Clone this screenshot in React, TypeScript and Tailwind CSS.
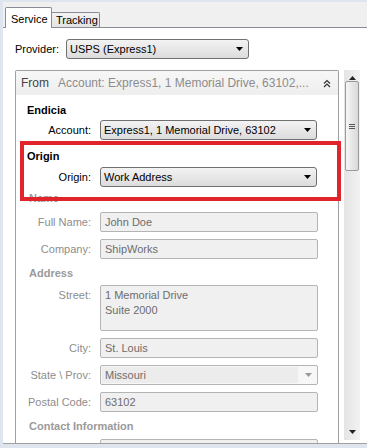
import React from "react";

const Arrow = ({ color = "#000" }: { color?: string }) => (
  <svg width="7" height="4" viewBox="0 0 7 4">
    <path d="M0 0h7L3.5 4z" fill={color} />
  </svg>
);

const Combo = ({ value, w = "w-[217px]" }: { value: string; w?: string }) => (
  <div
    className={`${w} h-[20px] flex items-center justify-between rounded-[3px] border border-[#707070] bg-gradient-to-b from-[#f3f3f3] to-[#dcdcdc] pl-[3px] pr-[5px] text-black`}
  >
    <span>{value}</span>
    <Arrow />
  </div>
);

const Field = ({ value, h = "h-[20px]" }: { value: string; h?: string }) => (
  <div
    className={`w-[218px] ${h} rounded-[2px] border border-[#b4b4b4] bg-[#f0f0f0] pl-[4px] pt-[2px] text-[#6d6d6d] leading-[15px]`}
  >
    {value.split("\n").map((l) => (
      <div key={l}>{l}</div>
    ))}
  </div>
);

const Row = ({
  label,
  disabled,
  className = "",
  children,
}: {
  label: string;
  disabled?: boolean;
  className?: string;
  children: React.ReactNode;
}) => (
  <div className={`flex items-start ${className}`}>
    <div
      className={`w-[76px] h-[20px] flex items-center justify-end pr-[1px] ${
        disabled ? "text-[#8d8d8d]" : "text-black"
      }`}
    >
      {label}
    </div>
    <div className="ml-[8px]">{children}</div>
  </div>
);

const Heading = ({ text, disabled, className = "" }: { text: string; disabled?: boolean; className?: string }) => (
  <div
    className={`h-[14px] leading-[14px] font-bold ${
      disabled ? "pl-[13px] text-[#9a9a9a]" : "pl-[11px] text-black"
    } ${className}`}
  >
    {text}
  </div>
);

export default function App() {
  return (
    <div className="relative w-[367px] h-[448px] overflow-hidden bg-[#dfe5ee] pl-[3px] pt-[2px] font-['Liberation_Sans',Arial,sans-serif] text-[11px]">
      <div className="h-[442px] flex flex-col bg-white border-b border-[#a0a0a0]">
        {/* tabs */}
        <div className="h-[26px] shrink-0 flex items-end bg-[#f0f0f0] border-b border-[#898c95] pl-[2px]">
          <div className="relative z-10 -mb-px w-[47px] h-[21px] bg-white border border-b-0 border-[#898c95] rounded-t-[2px] pl-[5px] pt-[3px] text-black">
            Service
          </div>
          <div className="w-[48px] h-[15px] border border-l-0 border-b-0 border-[#898c95] rounded-tr-[2px] bg-gradient-to-b from-[#f2f2f2] to-[#e3e3e3] pl-[4px] text-black leading-[14px]">
            Tracking
          </div>
        </div>

        {/* provider */}
        <div className="mt-[11px] flex items-center pl-[12px] text-black">
          <span className="w-[51px]">Provider:</span>
          <Combo value="USPS (Express1)" w="w-[183px]" />
        </div>

        <div className="mt-[11px] flex flex-1 min-h-0 pl-[12px]">
          {/* group box */}
          <div className="w-[324px] flex flex-col border border-b-0 border-[#a0a0a0] rounded-t-[2px] overflow-hidden">
            <div className="h-[24px] shrink-0 flex items-center bg-gradient-to-b from-[#f7f7f7] to-[#eeeeee] pl-[5px] pr-[7px] text-[12px]">
              <span className="text-[#444]">From</span>
              <span className="ml-[9px] flex-1 truncate text-[#8c8c8c]">
                Account: Express1, 1 Memorial Drive, 63102,...
              </span>
              <svg width="8" height="9" viewBox="0 0 8 9" className="ml-[8px]">
                <path d="M1 4.5L4 1.5l3 3M1 8L4 5l3 3" fill="none" stroke="#333" strokeWidth="1.2" />
              </svg>
            </div>

            <Heading text="Endicia" className="mt-[8px]" />
            <Row label="Account:" className="mt-[3px]">
              <Combo value="Express1, 1 Memorial Drive, 63102" />
            </Row>

            <Heading text="Origin" className="mt-[9px]" />
            <Row label="Origin:" className="mt-[4px]">
              <Combo value="Work Address" />
            </Row>

            <Heading text="Name" disabled className="mt-[4px]" />
            <Row label="Full Name:" disabled className="mt-[7px]">
              <Field value="John Doe" />
            </Row>
            <Row label="Company:" disabled className="mt-[7px]">
              <Field value="ShipWorks" />
            </Row>

            <Heading text="Address" disabled className="mt-[7px]" />
            <Row label="Street:" disabled className="mt-[5px]">
              <Field value={"1 Memorial Drive\nSuite 2000"} h="h-[46px]" />
            </Row>
            <Row label="City:" disabled className="mt-[7px]">
              <Field value="St. Louis" />
            </Row>
            <Row label="State \ Prov:" disabled className="mt-[7px]">
              <div className="w-[218px] h-[20px] flex rounded-[2px] border border-[#b4b4b4] bg-[#f7f7f7]">
                <div className="flex-1 bg-[#ececec] m-px pl-[3px] text-[#6d6d6d] leading-[16px]">Missouri</div>
                <div className="w-[18px] flex items-center justify-center">
                  <Arrow color="#9a9a9a" />
                </div>
              </div>
            </Row>
            <Row label="Postal Code:" disabled className="mt-[7px]">
              <Field value="63102" />
            </Row>

            <Heading text="Contact Information" disabled className="mt-[7px]" />
            <Row label="" disabled className="mt-[6px]">
              <Field value="" />
            </Row>
          </div>

          {/* scrollbar */}
          <div className="ml-[5px] w-[16px] mb-[3px] flex flex-col items-center bg-gradient-to-r from-[#e4e4e4] to-[#f2f2f2]">
            <div className="h-[10px] flex items-end">
              <svg width="7" height="4" viewBox="0 0 7 4">
                <path d="M0 4h7L3.5 0z" fill="#222" />
              </svg>
            </div>
            <div className="mt-[1px] w-[14px] h-[90px] rounded-[2px] border border-[#9a9a9a] bg-gradient-to-r from-[#f6f6f6] to-[#d8d8d8] flex flex-col items-center justify-center gap-[1px]">
              <div className="w-[6px] h-px bg-[#555]" />
              <div className="w-[6px] h-px bg-[#555]" />
              <div className="w-[6px] h-px bg-[#555]" />
            </div>
            <div className="flex-1" />
            <div className="h-[10px]">
              <svg width="7" height="4" viewBox="0 0 7 4">
                <path d="M0 0h7L3.5 4z" fill="#222" />
              </svg>
            </div>
          </div>
        </div>
      </div>

      {/* red highlight */}
      <div className="absolute left-[20px] top-[141px] w-[321px] h-[60px] border-[4px] border-[#e1232b]" />
    </div>
  );
}
